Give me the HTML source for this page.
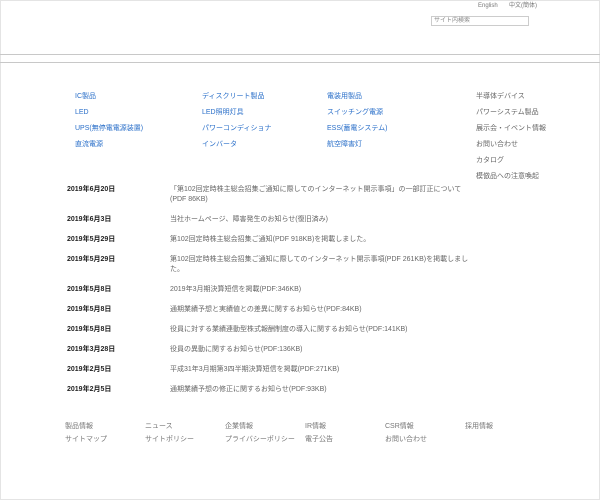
<!DOCTYPE html>
<html><head><meta charset="utf-8"><style>
body{margin:0;width:600px;height:500px;background:#fff;position:relative;overflow:hidden;font-family:"Liberation Sans","Noto Sans CJK JP",sans-serif;font-size:7px;color:#555}
.a{position:absolute;white-space:nowrap;line-height:10px}
.b{color:#2a6fc9}
.d{font-weight:bold;color:#222}
.t{color:#666}
</style></head><body>
<div style="position:absolute;left:0;top:0;width:600px;height:500px;border:1px solid #e4e4e4;box-sizing:border-box"></div>
<div class="a" style="left:478px;top:1px;font-size:6px;color:#777">English</div>
<div class="a" style="left:509px;top:1px;font-size:6px;color:#777">中文(簡体)</div>
<div style="position:absolute;left:431px;top:16px;width:98px;height:10px;border:1px solid #ccc;box-sizing:border-box"></div>
<div class="a" style="left:434px;top:16px;font-size:6px;color:#888">サイト内検索</div>
<div style="position:absolute;left:0;top:54px;width:600px;height:1px;background:#c8c8c8"></div>
<div style="position:absolute;left:0;top:62px;width:600px;height:1px;background:#c8c8c8"></div>

<div class="a b" style="left:75px;top:92px">IC製品</div>
<div class="a b" style="left:75px;top:108px">LED</div>
<div class="a b" style="left:75px;top:124px">UPS(無停電電源装置)</div>
<div class="a b" style="left:75px;top:140px">直流電源</div>
<div class="a b" style="left:202px;top:92px">ディスクリート製品</div>
<div class="a b" style="left:202px;top:108px">LED照明灯具</div>
<div class="a b" style="left:202px;top:124px">パワーコンディショナ</div>
<div class="a b" style="left:202px;top:140px">インバータ</div>
<div class="a b" style="left:327px;top:92px">電装用製品</div>
<div class="a b" style="left:327px;top:108px">スイッチング電源</div>
<div class="a b" style="left:327px;top:124px">ESS(蓄電システム)</div>
<div class="a b" style="left:327px;top:140px">航空障害灯</div>
<div class="a t" style="left:476px;top:92px">半導体デバイス</div>
<div class="a t" style="left:476px;top:108px">パワーシステム製品</div>
<div class="a t" style="left:476px;top:124px">展示会・イベント情報</div>
<div class="a t" style="left:476px;top:140px">お問い合わせ</div>
<div class="a t" style="left:476px;top:156px">カタログ</div>
<div class="a t" style="left:476px;top:172px">模倣品への注意喚起</div>

<div class="a d" style="left:67px;top:185px">2019年6月20日</div>
<div class="a t" style="left:170px;top:185px">「第102回定時株主総会招集ご通知に際してのインターネット開示事項」の一部訂正について<br>(PDF 86KB)</div>
<div class="a d" style="left:67px;top:215px">2019年6月3日</div>
<div class="a t" style="left:170px;top:215px">当社ホームページ、障害発生のお知らせ(復旧済み)</div>
<div class="a d" style="left:67px;top:235px">2019年5月29日</div>
<div class="a t" style="left:170px;top:235px">第102回定時株主総会招集ご通知(PDF 918KB)を掲載しました。</div>
<div class="a d" style="left:67px;top:255px">2019年5月29日</div>
<div class="a t" style="left:170px;top:255px">第102回定時株主総会招集ご通知に際してのインターネット開示事項(PDF 261KB)を掲載しまし<br>た。</div>
<div class="a d" style="left:67px;top:285px">2019年5月8日</div>
<div class="a t" style="left:170px;top:285px">2019年3月期決算短信を掲載(PDF:346KB)</div>
<div class="a d" style="left:67px;top:305px">2019年5月8日</div>
<div class="a t" style="left:170px;top:305px">通期業績予想と実績値との差異に関するお知らせ(PDF:84KB)</div>
<div class="a d" style="left:67px;top:325px">2019年5月8日</div>
<div class="a t" style="left:170px;top:325px">役員に対する業績連動型株式報酬制度の導入に関するお知らせ(PDF:141KB)</div>
<div class="a d" style="left:67px;top:345px">2019年3月28日</div>
<div class="a t" style="left:170px;top:345px">役員の異動に関するお知らせ(PDF:136KB)</div>
<div class="a d" style="left:67px;top:365px">2019年2月5日</div>
<div class="a t" style="left:170px;top:365px">平成31年3月期第3四半期決算短信を掲載(PDF:271KB)</div>
<div class="a d" style="left:67px;top:385px">2019年2月5日</div>
<div class="a t" style="left:170px;top:385px">通期業績予想の修正に関するお知らせ(PDF:93KB)</div>

<div class="a" style="left:65px;top:422px;color:#777">製品情報</div>
<div class="a" style="left:65px;top:435px;color:#777">サイトマップ</div>
<div class="a" style="left:145px;top:422px;color:#777">ニュース</div>
<div class="a" style="left:145px;top:435px;color:#777">サイトポリシー</div>
<div class="a" style="left:225px;top:422px;color:#777">企業情報</div>
<div class="a" style="left:225px;top:435px;color:#777">プライバシーポリシー</div>
<div class="a" style="left:305px;top:422px;color:#777">IR情報</div>
<div class="a" style="left:305px;top:435px;color:#777">電子公告</div>
<div class="a" style="left:385px;top:422px;color:#777">CSR情報</div>
<div class="a" style="left:385px;top:435px;color:#777">お問い合わせ</div>
<div class="a" style="left:465px;top:422px;color:#777">採用情報</div>
</body></html>
